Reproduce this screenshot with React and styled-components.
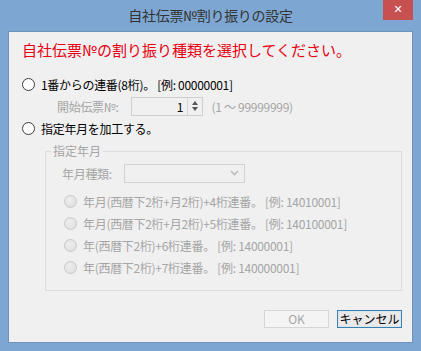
import React from "react";
import styled, { createGlobalStyle } from "styled-components";

const GlobalStyle = createGlobalStyle`
  html, body {
    margin: 0;
    padding: 0;
    background: #7da7d2;
  }
  body {
    font-family: "Noto Sans CJK JP", "Noto Sans", sans-serif;
  }
`;

function Radio({ label, disabled }) {
  return (
    <RadioRow $disabled={disabled}>
      <RadioCircle $disabled={disabled} />
      <span>{label}</span>
    </RadioRow>
  );
}

function App() {
  return (
    <>
      <GlobalStyle />
      <Window>
        <TitleBar>
          <span />
          <Title>自社伝票№割り振りの設定</Title>
          <CloseButton>✕</CloseButton>
        </TitleBar>

        <Client>
          <Heading>自社伝票№の割り振り種類を選択してください。</Heading>

          <Radio label="1番からの連番(8桁)。 [例: 00000001]" />
          <StartRow>
            <DimLabel>開始伝票№:</DimLabel>
            <SpinBox>
              <SpinValue>1</SpinValue>
              <SpinButtons>
                <SpinArrow $up />
                <SpinArrow />
              </SpinButtons>
            </SpinBox>
            <DimLabel>(1 ～ 99999999)</DimLabel>
          </StartRow>
          <Radio label="指定年月を加工する。" />

          <Group>
            <Legend>指定年月</Legend>
            <GroupBody>
              <ComboRow>
                <DimLabel>年月種類:</DimLabel>
                <Combo>
                  <svg width="9" height="6" viewBox="0 0 9 6">
                    <path d="M1 1 L4.5 4.5 L8 1" fill="none" stroke="#bcbcbc" strokeWidth="1.6" />
                  </svg>
                </Combo>
              </ComboRow>
              <Options>
                <Radio disabled label="年月(西暦下2桁+月2桁)+4桁連番。 [例: 14010001]" />
                <Radio disabled label="年月(西暦下2桁+月2桁)+5桁連番。 [例: 140100001]" />
                <Radio disabled label="年(西暦下2桁)+6桁連番。 [例: 14000001]" />
                <Radio disabled label="年(西暦下2桁)+7桁連番。 [例: 140000001]" />
              </Options>
            </GroupBody>
          </Group>

          <ButtonRow>
            <Button disabled>OK</Button>
            <Button $focused>キャンセル</Button>
          </ButtonRow>
        </Client>
      </Window>
    </>
  );
}

export default App;

const Window = styled.div`
  width: 421px;
  height: 351px;
  box-sizing: border-box;
  padding: 0 8px 8px;
  display: flex;
  flex-direction: column;
  background: #7da7d2;
`;

const TitleBar = styled.div`
  height: 31px;
  display: grid;
  grid-template-columns: 1fr auto 1fr;
  align-items: start;
`;

const Title = styled.div`
  font-size: 14px;
  line-height: 31px;
  color: #333;
  letter-spacing: -0.3px;
`;

const CloseButton = styled.div`
  justify-self: end;
  width: 30px;
  height: 20px;
  background: #c75050;
  color: #fff;
  font-size: 11px;
  font-weight: bold;
  line-height: 20px;
  text-align: center;
  font-family: "DejaVu Sans", sans-serif;
`;

const Client = styled.div`
  flex: 1;
  box-sizing: border-box;
  background: #f0f0f0;
  border: 1px solid #6e92b8;
  display: flex;
  flex-direction: column;
  padding: 8px 10px 0 13px;
  font-size: 12px;
  color: #000;
`;

const Heading = styled.div`
  font-size: 15px;
  line-height: 19px;
  color: #e60012;
  margin-bottom: 14px;
`;

const RadioRow = styled.div`
  height: 22px;
  display: flex;
  align-items: center;
  gap: 6px;
  color: ${(p) => (p.$disabled ? "#a6a6a6" : "#000")};
  white-space: nowrap;
  letter-spacing: -0.3px;
`;

const RadioCircle = styled.span`
  width: 11px;
  height: 11px;
  border-radius: 50%;
  border: 1px solid ${(p) => (p.$disabled ? "#c9c9c9" : "#3c3c3c")};
  background: ${(p) =>
    p.$disabled ? "radial-gradient(circle at 40% 35%, #eeeeee, #dcdcdc)" : "#ffffff"};
  flex: none;
`;

const StartRow = styled.div`
  height: 22px;
  display: flex;
  align-items: center;
  padding-left: 35px;
`;

const DimLabel = styled.span`
  color: #a6a6a6;
  white-space: nowrap;
  letter-spacing: -0.3px;
`;

const SpinBox = styled.div`
  width: 72px;
  height: 19px;
  box-sizing: border-box;
  border: 1px solid #cfcfcf;
  margin: 0 9px 0 12px;
  display: flex;
`;

const SpinValue = styled.div`
  flex: 1;
  text-align: right;
  line-height: 17px;
  padding-right: 3px;
  color: #000;
`;

const SpinButtons = styled.div`
  width: 14px;
  border-left: 1px solid #d6d6d6;
  display: flex;
  flex-direction: column;
  align-items: center;
  justify-content: center;
  gap: 2px;
`;

const SpinArrow = styled.span`
  width: 0;
  height: 0;
  border-left: 3.5px solid transparent;
  border-right: 3.5px solid transparent;
  ${(p) => (p.$up ? "border-bottom: 4px solid #555;" : "border-top: 4px solid #555;")}
`;

const Group = styled.fieldset`
  margin: 4px 0 0 23px;
  padding: 0;
  min-width: 0;
  border: 1px solid #dcdcdc;
`;

const Legend = styled.legend`
  margin-left: 5px;
  padding: 0 2px;
  font-size: 12px;
  line-height: 16px;
  color: #a6a6a6;
`;

const GroupBody = styled.div`
  padding: 4px 0 12px 16px;
`;

const ComboRow = styled.div`
  height: 20px;
  display: flex;
  align-items: center;
  gap: 12px;
  margin-bottom: 7px;
`;

const Combo = styled.div`
  width: 121px;
  height: 19px;
  box-sizing: border-box;
  border: 1px solid #d3d3d3;
  display: flex;
  align-items: center;
  justify-content: flex-end;
  padding-right: 5px;
`;

const Options = styled.div`
  padding-left: 2px;
  display: flex;
  flex-direction: column;
`;

const ButtonRow = styled.div`
  display: flex;
  justify-content: flex-end;
  gap: 8px;
  margin-top: 19px;
`;

const Button = styled.button`
  width: 65px;
  height: 18px;
  box-sizing: border-box;
  padding: 0;
  font-family: inherit;
  font-size: 12px;
  line-height: 16px;
  border: 1px solid ${(p) => (p.disabled ? "#d5d5d5" : p.$focused ? "#3c7fb1" : "#acacac")};
  background: ${(p) => (p.disabled ? "#f4f4f4" : "#e9e9e9")};
  color: ${(p) => (p.disabled ? "#a6a6a6" : "#000")};
  ${(p) => p.$focused && "box-shadow: inset 0 0 0 1px #d8e6f2;"}
`;
